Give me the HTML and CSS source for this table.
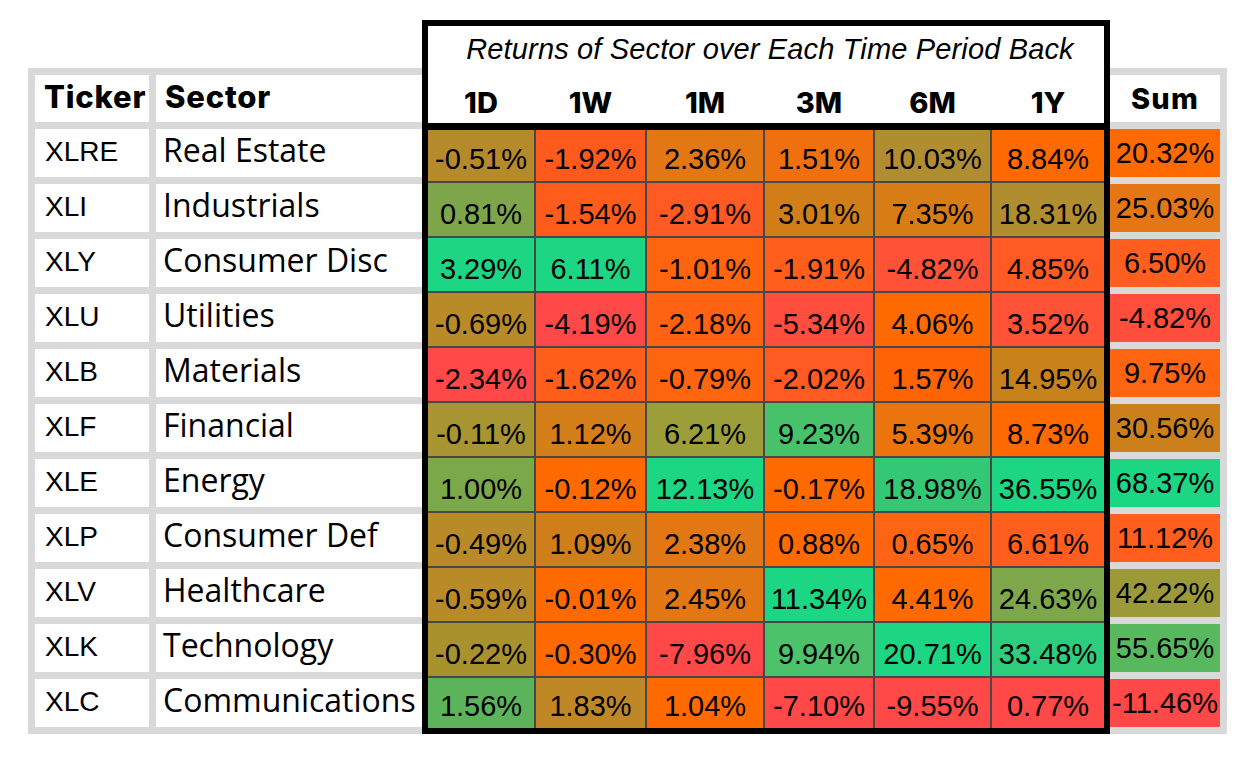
FILE: index.html
```html
<!DOCTYPE html>
<html lang="en">
<head>
<meta charset="utf-8">
<title>Sector Returns</title>
<link rel="stylesheet" href="styles.css">
</head>
<body>
<div class="page">
  <div class="side side-left">
    <div class="cell head">Ticker</div>
    <div class="cell head head-sector">Sector</div>
    <div class="cell ticker">XLRE</div><div class="cell sector">Real Estate</div>
    <div class="cell ticker">XLI</div><div class="cell sector">Industrials</div>
    <div class="cell ticker">XLY</div><div class="cell sector">Consumer Disc</div>
    <div class="cell ticker">XLU</div><div class="cell sector">Utilities</div>
    <div class="cell ticker">XLB</div><div class="cell sector">Materials</div>
    <div class="cell ticker">XLF</div><div class="cell sector">Financial</div>
    <div class="cell ticker">XLE</div><div class="cell sector">Energy</div>
    <div class="cell ticker">XLP</div><div class="cell sector">Consumer Def</div>
    <div class="cell ticker">XLV</div><div class="cell sector">Healthcare</div>
    <div class="cell ticker">XLK</div><div class="cell sector">Technology</div>
    <div class="cell ticker">XLC</div><div class="cell sector">Communications</div>
  </div>

  <div class="box">
    <div class="title">Returns of Sector over Each Time Period Back</div>
    <div class="periods">
      <div class="period">1D</div>
      <div class="period">1W</div>
      <div class="period">1M</div>
      <div class="period">3M</div>
      <div class="period">6M</div>
      <div class="period">1Y</div>
    </div>
    <div class="grid">
      <div class="val" style="background:#b58a2a">-0.51%</div>
      <div class="val" style="background:#ff5a1e">-1.92%</div>
      <div class="val" style="background:#e27714">2.36%</div>
      <div class="val" style="background:#f07010">1.51%</div>
      <div class="val" style="background:#b08e30">10.03%</div>
      <div class="val" style="background:#ff6a00">8.84%</div>

      <div class="val" style="background:#7ea54a">0.81%</div>
      <div class="val" style="background:#ff5c1c">-1.54%</div>
      <div class="val" style="background:#ff5a24">-2.91%</div>
      <div class="val" style="background:#d27e18">3.01%</div>
      <div class="val" style="background:#d87c16">7.35%</div>
      <div class="val" style="background:#b08e30">18.31%</div>

      <div class="val" style="background:#1cd683">3.29%</div>
      <div class="val" style="background:#1cd683">6.11%</div>
      <div class="val" style="background:#ff640e">-1.01%</div>
      <div class="val" style="background:#ff5e1c">-1.91%</div>
      <div class="val" style="background:#ff5236">-4.82%</div>
      <div class="val" style="background:#ff5a24">4.85%</div>

      <div class="val" style="background:#b88a28">-0.69%</div>
      <div class="val" style="background:#ff4848">-4.19%</div>
      <div class="val" style="background:#ff6212">-2.18%</div>
      <div class="val" style="background:#ff4e3e">-5.34%</div>
      <div class="val" style="background:#ff6a00">4.06%</div>
      <div class="val" style="background:#ff5236">3.52%</div>

      <div class="val" style="background:#ff4848">-2.34%</div>
      <div class="val" style="background:#ff5e1a">-1.62%</div>
      <div class="val" style="background:#ff640e">-0.79%</div>
      <div class="val" style="background:#ff5a22">-2.02%</div>
      <div class="val" style="background:#ff6404">1.57%</div>
      <div class="val" style="background:#c8821c">14.95%</div>

      <div class="val" style="background:#a89430">-0.11%</div>
      <div class="val" style="background:#d47f1a">1.12%</div>
      <div class="val" style="background:#9c9e3a">6.21%</div>
      <div class="val" style="background:#48c26a">9.23%</div>
      <div class="val" style="background:#ec740c">5.39%</div>
      <div class="val" style="background:#ff6a00">8.73%</div>

      <div class="val" style="background:#7ba848">1.00%</div>
      <div class="val" style="background:#ff6a00">-0.12%</div>
      <div class="val" style="background:#1cd683">12.13%</div>
      <div class="val" style="background:#ff6a00">-0.17%</div>
      <div class="val" style="background:#33c874">18.98%</div>
      <div class="val" style="background:#1cd683">36.55%</div>

      <div class="val" style="background:#b88a28">-0.49%</div>
      <div class="val" style="background:#d07e1a">1.09%</div>
      <div class="val" style="background:#e27714">2.38%</div>
      <div class="val" style="background:#ff6a00">0.88%</div>
      <div class="val" style="background:#ff6414">0.65%</div>
      <div class="val" style="background:#ff5e1e">6.61%</div>

      <div class="val" style="background:#b88a28">-0.59%</div>
      <div class="val" style="background:#ff6a00">-0.01%</div>
      <div class="val" style="background:#e27714">2.45%</div>
      <div class="val" style="background:#1cd683">11.34%</div>
      <div class="val" style="background:#ff6a00">4.41%</div>
      <div class="val" style="background:#7ea64a">24.63%</div>

      <div class="val" style="background:#a8922e">-0.22%</div>
      <div class="val" style="background:#ff6a00">-0.30%</div>
      <div class="val" style="background:#ff4848">-7.96%</div>
      <div class="val" style="background:#4cc26a">9.94%</div>
      <div class="val" style="background:#1cd683">20.71%</div>
      <div class="val" style="background:#2ccd7c">33.48%</div>

      <div class="val" style="background:#5cb45a">1.56%</div>
      <div class="val" style="background:#bf8726">1.83%</div>
      <div class="val" style="background:#ff6a00">1.04%</div>
      <div class="val" style="background:#ff4848">-7.10%</div>
      <div class="val" style="background:#ff4848">-9.55%</div>
      <div class="val" style="background:#ff4848">0.77%</div>
    </div>
  </div>

  <div class="side side-right">
    <div class="cell head-sum">Sum</div>
    <div class="cell sum" style="background:#ff6a00">20.32%</div>
    <div class="cell sum" style="background:#e47616">25.03%</div>
    <div class="cell sum" style="background:#ff5e1e">6.50%</div>
    <div class="cell sum" style="background:#ff4e3c">-4.82%</div>
    <div class="cell sum" style="background:#ff6410">9.75%</div>
    <div class="cell sum" style="background:#cc801c">30.56%</div>
    <div class="cell sum" style="background:#1cd683">68.37%</div>
    <div class="cell sum" style="background:#ff5e1e">11.12%</div>
    <div class="cell sum" style="background:#9c9a38">42.22%</div>
    <div class="cell sum" style="background:#58b85e">55.65%</div>
    <div class="cell sum" style="background:#ff4848">-11.46%</div>
  </div>
</div>
</body>
</html>
```

FILE: styles.css
```css
html, body {
  margin: 0;
  padding: 0;
  background: #ffffff;
}

body {
  width: 1250px;
  height: 758px;
  overflow: hidden;
  color: #000000;
  font-family: "Liberation Sans", Arial, sans-serif;
}

.page {
  display: flex;
  align-items: flex-end;
  padding: 20px 0 0 28px;
}

/* grey framed side tables */
.side {
  display: grid;
  grid-template-rows: 47px repeat(11, 48px);
  row-gap: 7px;
  background: #d9d9d9;
}

.side-left {
  grid-template-columns: 114px 266px;
  column-gap: 7px;
  padding: 7px 0 7px 7px;
}

.side-right {
  grid-template-columns: 110px;
  padding: 7px 7px 7px 0;
}

.cell {
  background: #ffffff;
  display: flex;
  align-items: flex-start;
  box-sizing: border-box;
  line-height: 1;
  white-space: nowrap;
}

.head {
  font-family: "Inter", "Liberation Sans", sans-serif;
  font-weight: 800;
  font-size: 31px;
  letter-spacing: 0.8px;
  padding: 6px 0 0 9px;
}

.head-sector {
  padding-left: 9px;
}

.ticker {
  font-family: "Liberation Sans", Arial, sans-serif;
  font-size: 28px;
  padding: 9px 0 0 10px;
}

.sector {
  font-family: "Open Sans", "Noto Sans", sans-serif;
  font-size: 32px;
  padding: 5px 0 0 7px;
}

.head-sum {
  justify-content: center;
  font-family: "Inter", "Liberation Sans", sans-serif;
  font-weight: 800;
  font-size: 29px;
  letter-spacing: 1.2px;
  padding-top: 9px;
}

.sum {
  justify-content: center;
  font-size: 29px;
  padding-top: 10px;
}

/* black framed returns block */
.box {
  width: 688px;
  box-sizing: border-box;
  border: 6px solid #000000;
  background: #ffffff;
}

.title {
  height: 48px;
  box-sizing: border-box;
  display: flex;
  justify-content: center;
  padding: 9px 0 0 8px;
  font-style: italic;
  font-size: 29px;
  letter-spacing: 0.15px;
  line-height: 1;
  white-space: nowrap;
}

.periods,
.grid {
  display: grid;
  grid-template-columns: 106px 109px 116px 108px 115px 112px;
  column-gap: 2px;
}

.periods {
  height: 56px;
  box-sizing: border-box;
  border-bottom: 7px solid #000000;
}

.period {
  display: flex;
  justify-content: center;
  padding-top: 14px;
  font-family: "Inter", "Liberation Sans", sans-serif;
  font-weight: 800;
  font-size: 29px;
  line-height: 1;
}

.grid {
  grid-template-rows: 51px repeat(9, 53px) 50px;
  row-gap: 2px;
  background: #484848;
}

.val {
  display: flex;
  justify-content: center;
  align-items: flex-end;
  padding-bottom: 7px;
  box-sizing: border-box;
  font-size: 29px;
  line-height: 1;
  white-space: nowrap;
}
```
